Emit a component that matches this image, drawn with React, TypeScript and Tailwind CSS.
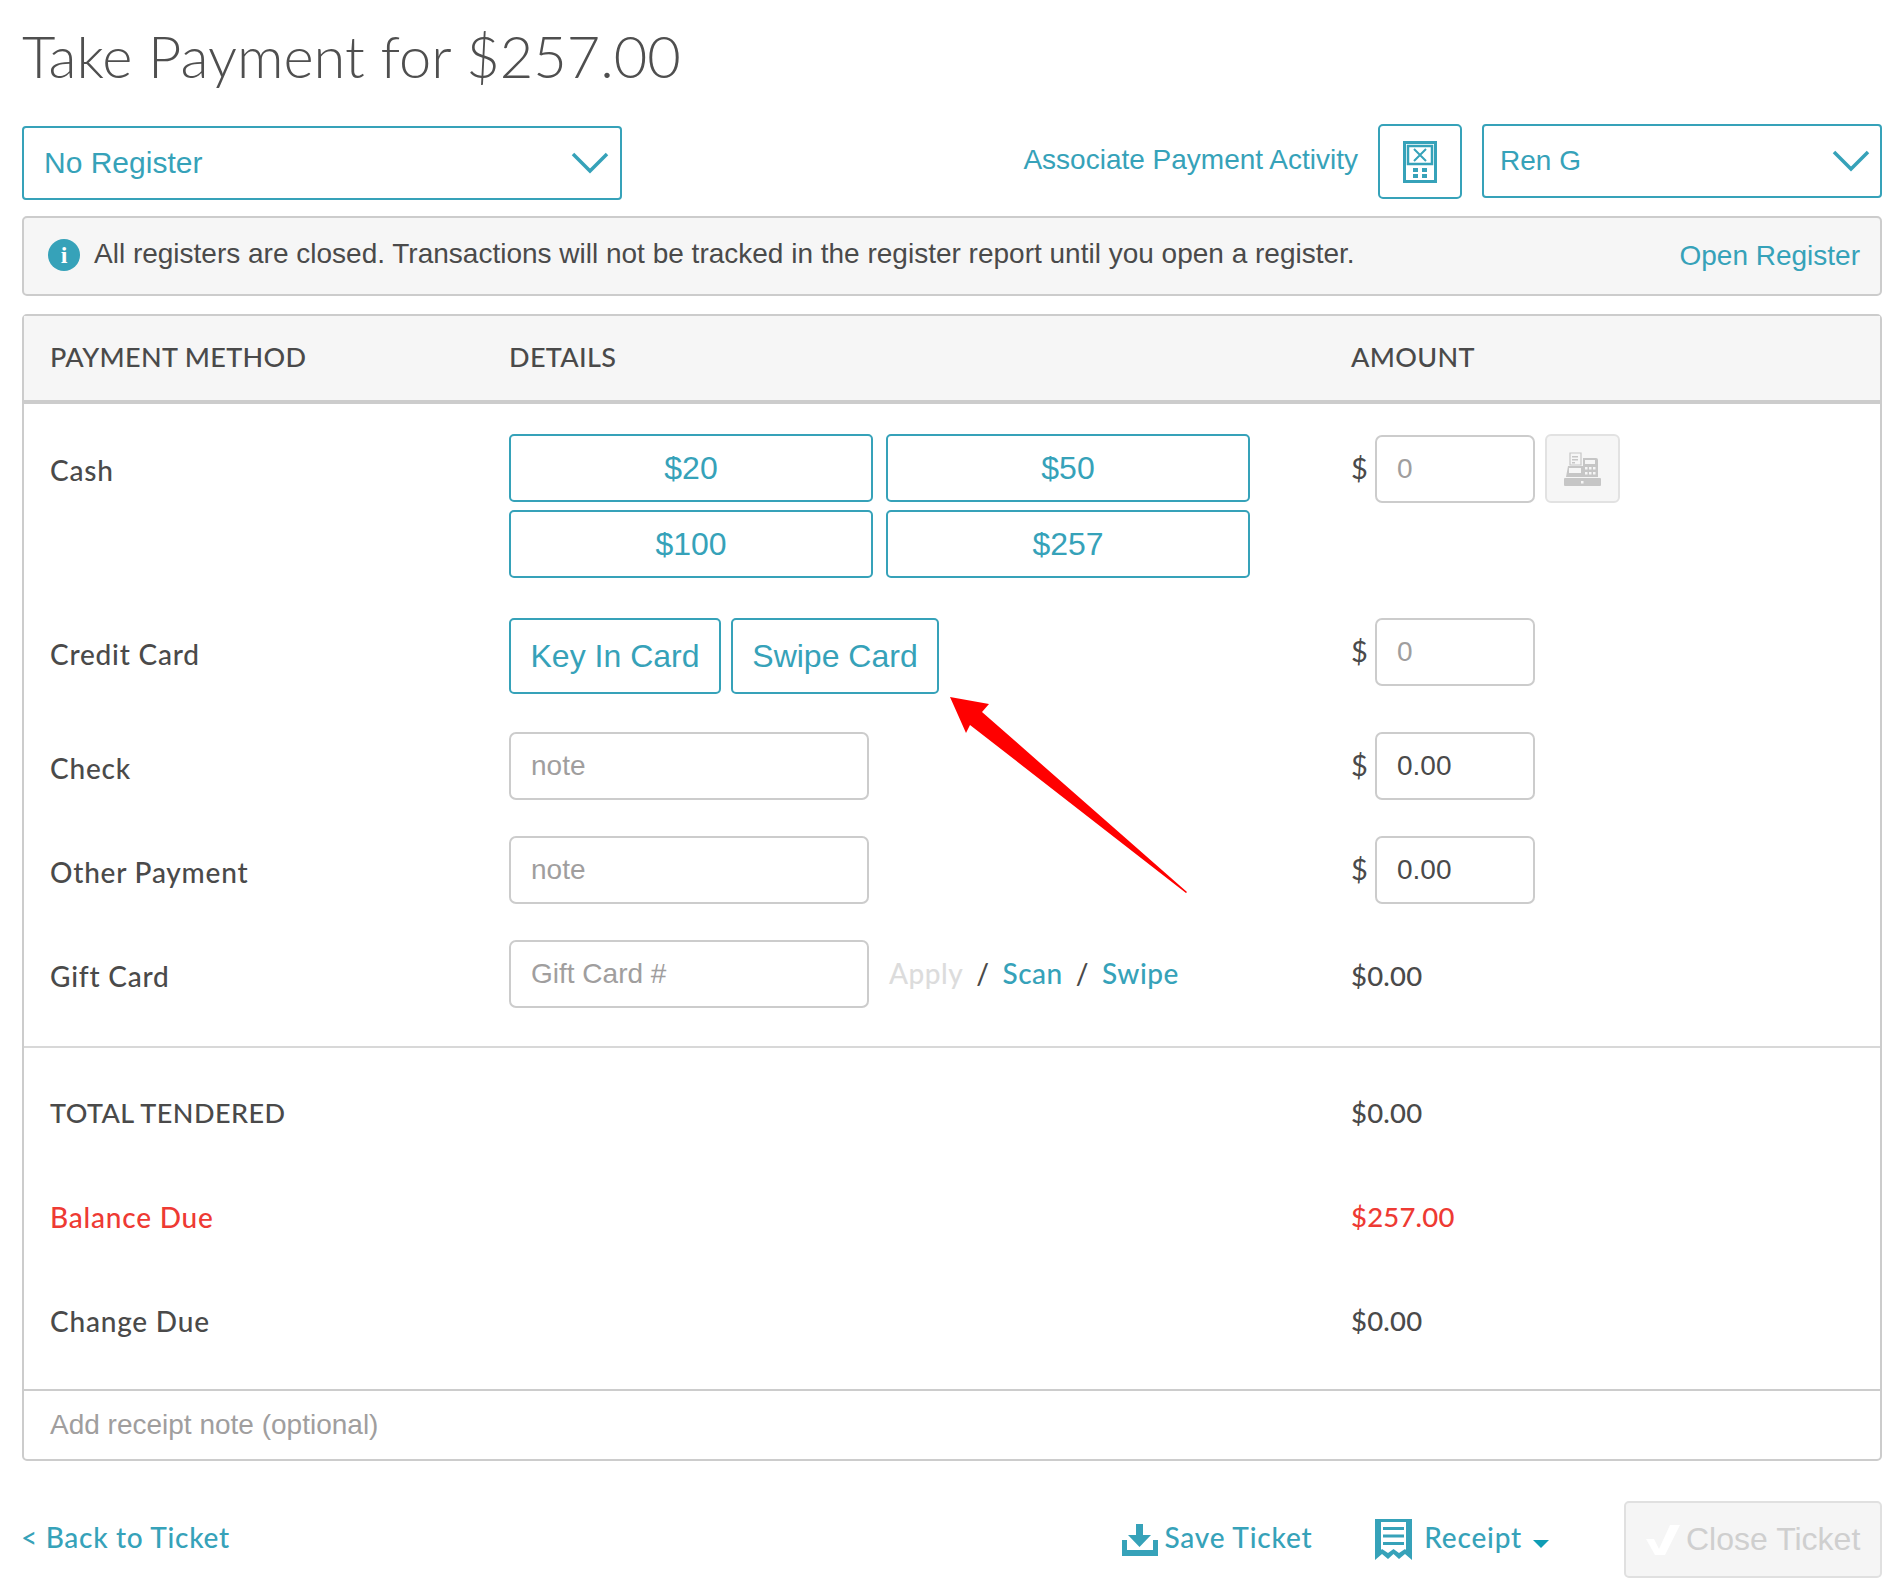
import React from 'react';

const lato = "font-['Lato',sans-serif]";
const arial = "font-['Liberation_Sans',Arial,sans-serif]";

function Chevron() {
  return (
    <svg width="38" height="22" viewBox="0 0 38 22" fill="none" stroke="#36a2b9" strokeWidth="3.5">
      <path d="M2 2 L19 19 L36 2" />
    </svg>
  );
}

function CalcIcon() {
  return (
    <svg width="34" height="42" viewBox="0 0 34 42" fill="none" stroke="#36a2b9">
      <rect x="1.5" y="1.5" width="31" height="39" strokeWidth="3" />
      <rect x="5" y="5" width="24" height="18" strokeWidth="2.5" />
      <path d="M11 8 L23 20 M23 8 L11 20" strokeWidth="2" />
      <g fill="#36a2b9" stroke="none">
        <rect x="10" y="27" width="5" height="4" />
        <rect x="19" y="27" width="5" height="4" />
        <rect x="10" y="33" width="5" height="4" />
        <rect x="19" y="33" width="5" height="4" />
      </g>
    </svg>
  );
}

function RegisterIcon() {
  return (
    <svg width="37" height="34" viewBox="0 0 37 34" fill="#c6c6c6">
      <path d="M6 1 H17 V13 H6 Z" fill="#f6f6f6" stroke="#c6c6c6" strokeWidth="1.2" />
      <rect x="8" y="4" width="6" height="1.5" />
      <rect x="8" y="7" width="6" height="1.5" />
      <rect x="8" y="10" width="3" height="1.5" />
      <path d="M19 6 H32 Q34 6 34 8 V25 H2 L4 14 H19 Z" />
      <rect x="21" y="8" width="10" height="4" fill="#f6f6f6" />
      <g fill="#f6f6f6">
        <rect x="21" y="15" width="2.5" height="2.5" />
        <rect x="25" y="15" width="2.5" height="2.5" />
        <rect x="29" y="15" width="2.5" height="2.5" />
        <rect x="21" y="20" width="2.5" height="2.5" />
        <rect x="25" y="20" width="2.5" height="2.5" />
        <rect x="29" y="20" width="2.5" height="2.5" />
        <rect x="5" y="16" width="12" height="5" />
      </g>
      <rect x="0" y="26" width="37" height="8" rx="1" />
      <rect x="17" y="29" width="2.5" height="2.5" fill="#f6f6f6" />
    </svg>
  );
}

function DownloadIcon() {
  return (
    <svg width="36" height="32" viewBox="0 0 36 32" fill="#36a2b9">
      <path d="M14 0 H21 V11 H29 L17.5 23 L6 11 H14 Z" />
      <path d="M0 16 H5 V26 H31 V16 H36 V32 H0 Z" />
    </svg>
  );
}

function ReceiptIcon() {
  return (
    <svg width="37" height="41" viewBox="0 0 37 41" fill="none">
      <path d="M0 0 H37 V41 L30 35 L24 40 L18.5 35 L13 40 L7 35 L0 41 Z" fill="#36a2b9" />
      <path d="M6 3 H31 V31 L30 30 L24 34 L18.5 30 L13 34 L7 30 L6 31 Z" fill="#fff" />
      <g fill="#36a2b9">
        <rect x="8" y="8" width="21" height="3" />
        <rect x="8" y="15.5" width="21" height="3" />
        <rect x="8" y="23" width="21" height="3" />
      </g>
    </svg>
  );
}

function CashButton({ label }: { label: string }) {
  return (
    <button className={`h-[68px] w-[364px] rounded-[5px] border-2 border-[#36a2b9] bg-white text-[32px] text-[#36a2b9] ${arial}`}>
      {label}
    </button>
  );
}

function TextField({ placeholder, value, width }: { placeholder?: string; value?: string; width: string }) {
  return (
    <input
      readOnly
      placeholder={placeholder}
      value={value}
      className={`h-[68px] ${width} rounded-[7px] border-2 border-[#cccccc] bg-white px-[20px] text-[28px] text-[#4a4a4a] placeholder:text-[#a09e9e] outline-none ${arial}`}
    />
  );
}

function AmountField({ placeholder, value }: { placeholder?: string; value?: string }) {
  return (
    <div className="flex items-center">
      <span className={`-mt-[2px] w-[24px] text-[29px] text-[#4a4a4a] ${lato}`}>$</span>
      <TextField placeholder={placeholder} value={value} width="w-[160px]" />
    </div>
  );
}

function Row({ label, children, amount, className }: { label: string; children: React.ReactNode; amount: React.ReactNode; className: string }) {
  return (
    <div className={`grid grid-cols-[485px_842px_1fr] ${className}`}>
      <div className={`flex h-[71px] items-center pl-[26px] text-[28px] font-medium tracking-[0.8px] text-[#4a4a4a] ${lato}`}>{label}</div>
      <div>{children}</div>
      <div>{amount}</div>
    </div>
  );
}

function TotalRow({ label, value, color, upper }: { label: string; value: string; color: string; upper?: boolean }) {
  return (
    <div className={`grid h-[104px] grid-cols-[485px_842px_1fr] items-center font-medium ${color} ${lato}`}>
      <div className={`pl-[26px] ${upper ? 'text-[27px] tracking-[0.45px]' : 'text-[28px] tracking-[0.8px]'}`}>{label}</div>
      <div />
      <div className="text-[27.5px] tracking-[0.2px]">{value}</div>
    </div>
  );
}

export default function App() {
  return (
    <div className="relative h-[1592px] w-[1895px] overflow-hidden bg-white pl-[22px] pr-[13px]">
      <h1 className={`h-[124px] pt-[20px] text-[57.8px] leading-[72px] font-light text-[#4f4f4f] ${lato}`}>Take Payment for $257.00</h1>

      {/* register / staff bar */}
      <div className="flex h-[76px] items-start justify-between">
        <div className="mt-[2px] flex h-[74px] w-[600px] items-center justify-between rounded-[4px] border-2 border-[#36a2b9] pl-[20px] pr-[11px]">
          <span className={`-mt-[2px] text-[30px] text-[#36a2b9] ${arial}`}>No Register</span>
          <Chevron />
        </div>
        <div className="flex items-start">
          <span className={`mt-[15px] mr-[20px] text-[28px] text-[#36a2b9] ${arial}`}>Associate Payment Activity</span>
          <button className="flex h-[75px] w-[84px] items-center justify-center rounded-[5px] border-2 border-[#36a2b9]">
            <CalcIcon />
          </button>
          <div className="ml-[20px] flex h-[74px] w-[400px] items-center justify-between rounded-[4px] border-2 border-[#36a2b9] pl-[16px] pr-[10px]">
            <span className={`text-[28px] text-[#36a2b9] ${arial}`}>Ren G</span>
            <Chevron />
          </div>
        </div>
      </div>

      {/* closed registers notice */}
      <div className="mt-[16px] flex h-[80px] items-center justify-between rounded-[5px] border-2 border-[#cccccc] bg-[#f6f6f6] pl-[24px] pr-[20px]">
        <div className="flex items-center">
          <div className={`-mt-[2px] mr-[14px] flex h-[32px] w-[32px] items-center justify-center rounded-full bg-[#36a2b9] text-[24px] font-bold text-white font-['Liberation_Serif',serif]`}>i</div>
          <span className={`-mt-[5px] text-[28px] text-[#4a4a4a] ${arial}`}>All registers are closed. Transactions will not be tracked in the register report until you open a register.</span>
        </div>
        <span className={`text-[28px] text-[#36a2b9] ${arial}`}>Open Register</span>
      </div>

      {/* payment table */}
      <div className="mt-[18px] h-[1147px] rounded-[5px] border-2 border-[#cccccc]">
        <div className={`grid h-[88px] grid-cols-[485px_842px_1fr] items-center border-b-[4px] border-[#cccccc] bg-[#f6f6f6] pb-[2px] text-[27px] font-medium tracking-[0.35px] text-[#4a4a4a] ${lato}`}>
          <div className="pl-[26px]">PAYMENT METHOD</div>
          <div>DETAILS</div>
          <div>AMOUNT</div>
        </div>

        <Row
          label="Cash"
          className="mt-[30px]"
          amount={
            <div className="flex items-center gap-[10px]">
              <AmountField placeholder="0" />
              <button className="flex h-[69px] w-[75px] items-center justify-center rounded-[6px] border-2 border-[#e2e2e2] bg-[#f6f6f6]">
                <RegisterIcon />
              </button>
            </div>
          }
        >
          <div className="flex flex-col gap-[8px]">
            <div className="flex gap-[13px]">
              <CashButton label="$20" />
              <CashButton label="$50" />
            </div>
            <div className="flex gap-[13px]">
              <CashButton label="$100" />
              <CashButton label="$257" />
            </div>
          </div>
        </Row>

        <Row label="Credit Card" className="mt-[40px]" amount={<AmountField placeholder="0" />}>
          <div className="flex gap-[10px]">
            <button className={`h-[76px] w-[212px] rounded-[5px] border-2 border-[#36a2b9] text-[32px] text-[#36a2b9] ${arial}`}>Key In Card</button>
            <button className={`h-[76px] w-[208px] rounded-[5px] border-2 border-[#36a2b9] text-[32px] text-[#36a2b9] ${arial}`}>Swipe Card</button>
          </div>
        </Row>

        <Row label="Check" className="mt-[38px]" amount={<AmountField value="0.00" />}>
          <TextField placeholder="note" width="w-[360px]" />
        </Row>

        <Row label="Other Payment" className="mt-[33px]" amount={<AmountField value="0.00" />}>
          <TextField placeholder="note" width="w-[360px]" />
        </Row>

        <Row
          label="Gift Card"
          className="mt-[33px]"
          amount={<div className={`flex h-[71px] items-center text-[27.5px] font-medium tracking-[0.2px] text-[#4a4a4a] ${lato}`}>$0.00</div>}
        >
          <div className="flex items-center">
            <TextField placeholder="Gift Card #" width="w-[360px]" />
            <div className={`mb-[3px] ml-[20px] flex items-center text-[28px] font-medium tracking-[0.5px] ${lato}`}>
              <span className="text-[#dcdcdc]">Apply</span>
              <span className="mx-[13px] text-[#4a4a4a]">/</span>
              <span className="text-[#36a2b9]">Scan</span>
              <span className="mx-[13px] text-[#4a4a4a]">/</span>
              <span className="text-[#36a2b9]">Swipe</span>
            </div>
          </div>
        </Row>

        <div className="mt-[35px] border-t-2 border-[#d8d8d8] pt-[13px]">
          <TotalRow label="TOTAL TENDERED" value="$0.00" color="text-[#4a4a4a]" upper />
          <TotalRow label="Balance Due" value="$257.00" color="text-[#ee3a33]" />
          <TotalRow label="Change Due" value="$0.00" color="text-[#4a4a4a]" />
        </div>

        <div className={`mt-[16px] flex h-[69px] items-center border-t-2 border-[#cccccc] pl-[26px] text-[28px] text-[#a09e9e] ${arial}`}>
          Add receipt note (optional)
        </div>
      </div>

      {/* footer actions */}
      <div className="mt-[40px] flex items-center justify-between">
        <span className={`mb-[5px] -ml-[1px] text-[28px] font-medium tracking-[0.7px] text-[#36a2b9] ${lato}`}>&lt; Back to Ticket</span>
        <div className="flex items-center">
          <DownloadIcon />
          <span className={`mb-[5px] ml-[6px] text-[28px] font-medium tracking-[0.8px] text-[#36a2b9] ${lato}`}>Save Ticket</span>
          <span className="ml-[63px]"><ReceiptIcon /></span>
          <span className={`mb-[5px] ml-[12px] text-[28px] font-medium tracking-[0.8px] text-[#36a2b9] ${lato}`}>Receipt</span>
          <span className="ml-[11px] mt-[8px] h-0 w-0 border-x-[8px] border-t-[8px] border-x-transparent border-t-[#0f9db5]" />
          <button className="ml-[75px] flex h-[77px] w-[258px] items-center rounded-[5px] border-2 border-[#e0e0e0] bg-[#f5f5f5] pl-[20px]">
            <svg width="34" height="30" viewBox="0 0 34 30" fill="#ffffff">
              <path d="M0 14 H8 L13 24 L24 0 H34 L19 30 H9 Z" />
            </svg>
            <span className={`-mt-[2px] ml-[6px] text-[32px] text-[#cfcfcf] ${arial}`}>Close Ticket</span>
          </button>
        </div>
      </div>

      {/* red annotation arrow */}
      <svg className="absolute left-[940px] top-[690px]" width="260" height="210" viewBox="940 690 260 210">
        <polygon points="950,697 989,704 982,712 1187,892 1186,893 970,725 966,733" fill="#ff0000" />
      </svg>
    </div>
  );
}
